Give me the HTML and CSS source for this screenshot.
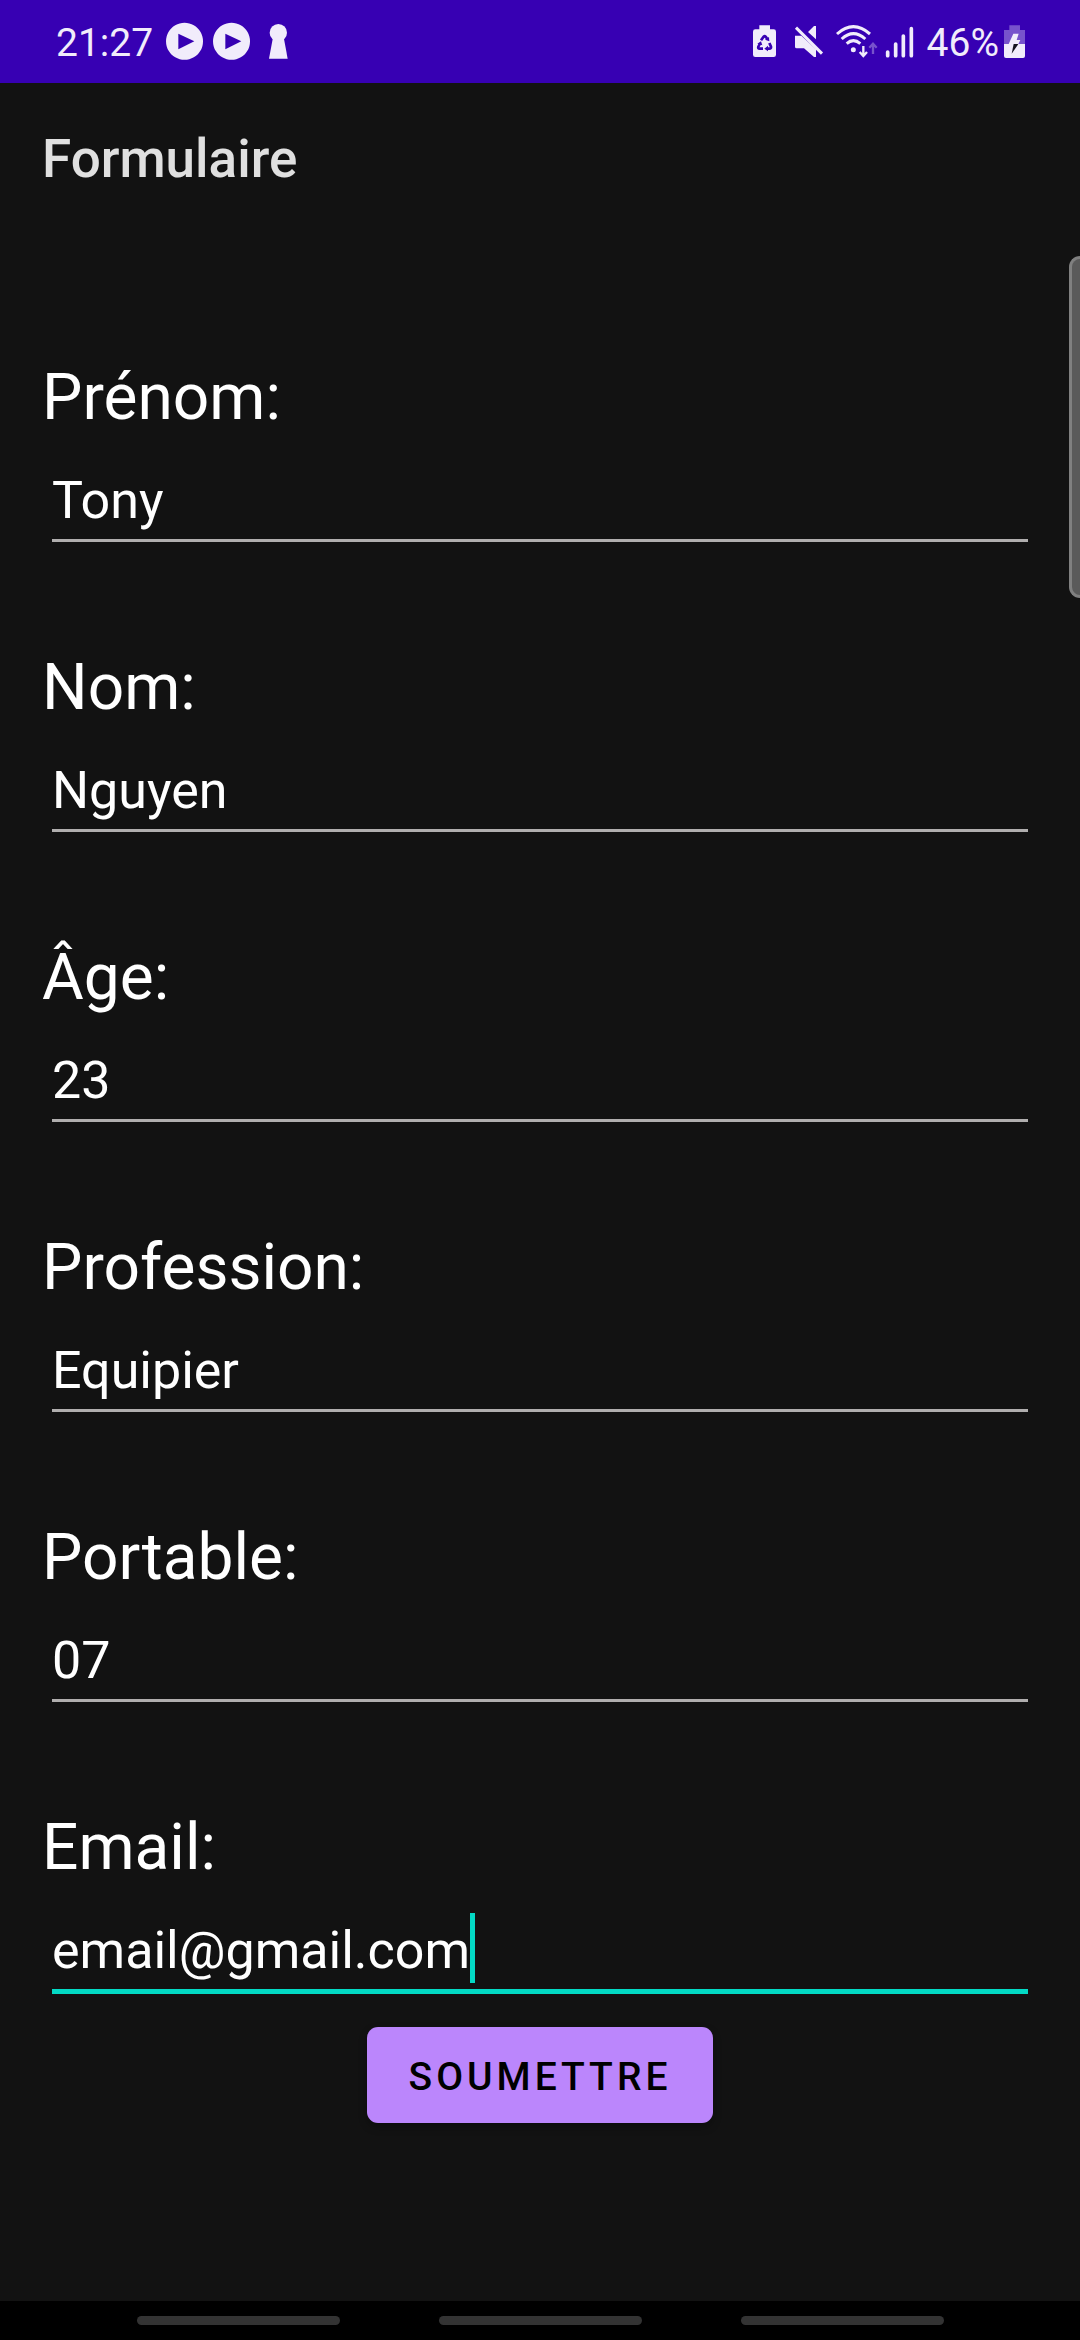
FILE: index.html
```html
<!DOCTYPE html>
<html lang="fr">
<head>
<meta charset="utf-8">
<meta name="viewport" content="width=device-width, initial-scale=1">
<title>Formulaire</title>
<link rel="stylesheet" href="styles.css">
</head>
<body>
<div class="status-bar">
  <div class="status-left">
    <span class="status-text">21:27</span>
    <svg class="icon icon-play" viewBox="375 66 117 117" aria-hidden="true"><path fill-rule="evenodd" d="M433.500 68.500a55.500 55.500 0 1 0 0.100 0ZM415 101L463 124L415 148Z"/></svg>
    <svg class="icon icon-play" viewBox="375 66 117 117" aria-hidden="true"><path fill-rule="evenodd" d="M433.500 68.500a55.500 55.500 0 1 0 0.100 0ZM415 101L463 124L415 148Z"/></svg>
    <svg class="icon icon-keyhole" viewBox="684 66 63 117" aria-hidden="true"><circle cx="715" cy="98" r="26"/><path d="M699 112H731L743 176H687Z"/></svg>
  </div>
  <div class="status-right">
    <svg class="icon icon-saver" viewBox="60 66 75 117" aria-hidden="true"><path d="M82 76H114V88H125Q132 88 132 95V164Q132 171 125 171H70Q63 171 63 164V95Q63 88 70 88H82Z"/><g class="cut"><path d="M87 121L95 110Q98 107 101 110L106 117"/><path d="M112 129L117 140Q118 146 112 146H104"/><path d="M93 146H83Q77 146 79 140L84 131"/></g><g class="cut-heads"><path d="M99 119L111 111L112 124Z"/><path d="M108 137V154L97 146Z"/><path d="M76 131L87 124L91 136Z"/></g></svg>
    <svg class="icon icon-mute" viewBox="186 66 90 117" aria-hidden="true"><path d="M189 107H208L252 148V171H246L216 145H194Q189 145 189 140ZM228 96L246 78H252V118Z"/><path class="line" d="M192 83L270 161"/></svg>
    <svg class="icon icon-wifi" viewBox="309 66 129 117" aria-hidden="true"><path class="line" d="M315 102Q364 58 414 102M329 117Q364 85 400 117M344 131Q364 113 385 131"/><circle cx="364" cy="149" r="7.500"/><path class="arrow" d="M394 138V167M383 156L394 168L405 156"/><path class="arrow dim" d="M423 162V132M412 143L423 131L434 143"/></svg>
    <svg class="icon icon-signal" viewBox="459 66 87 117" aria-hidden="true"><path class="bars" d="M467 156V167M491 132V167M514 108V167M538 86V167"/></svg>
    <span class="status-text percent">46%</span>
    <svg class="icon icon-battery" viewBox="816 66 69 117" aria-hidden="true"><path class="dim" d="M835 76H867V90H882V132H819V90H835Z"/><path d="M819 132H882V168Q882 174 876 174H825Q819 174 819 168Z"/><path d="M847 101H863L857 120H868L862 132H833Z"/><path class="bolt" d="M848 132H862L842 161Z"/></svg>
  </div>
</div>
<header class="app-bar"><h1 class="title">Formulaire</h1></header>
<main class="content">
  <form class="form">
    <div class="fields">
      <div class="field"><label class="label" for="prenom">Prénom:</label><div class="entry"><input class="input" id="prenom" type="text" value="Tony"></div></div>
      <div class="field"><label class="label" for="nom">Nom:</label><div class="entry"><input class="input" id="nom" type="text" value="Nguyen"></div></div>
      <div class="field"><label class="label" for="age">Âge:</label><div class="entry"><input class="input" id="age" type="text" inputmode="numeric" value="23"></div></div>
      <div class="field"><label class="label" for="profession">Profession:</label><div class="entry"><input class="input" id="profession" type="text" value="Equipier"></div></div>
      <div class="field"><label class="label" for="portable">Portable:</label><div class="entry"><input class="input" id="portable" type="tel" value="07"></div></div>
      <div class="field"><label class="label" for="email">Email:</label><div class="entry active"><input class="input" id="email" type="email" value="email@gmail.com"><span class="caret"></span></div></div>
    </div>
    <button class="submit" type="button">SOUMETTRE</button>
  </form>
</main>
<div class="edge-handle"></div>
<nav class="nav-bar" aria-label="Navigation"><span class="pill"></span><span class="pill"></span><span class="pill"></span></nav>
</body>
</html>
```
FILE: styles.css
```css
* { box-sizing: border-box; }
body {
  margin: 0;
  min-height: 100vh;
  display: flex;
  flex-direction: column;
  background: #121212;
  color: #fff;
  font-family: Roboto, "Liberation Sans", sans-serif;
  overflow-x: hidden;
}
.status-bar {
  height: 83px;
  padding: 0 54px 0 56px;
  display: flex;
  justify-content: space-between;
  background: #3700b3;
  color: #f1ecfb;
}
.status-left, .status-right { display: flex; align-items: center; }
.status-text { padding-top: 4px; font-size: 39px; line-height: 83px; }
.icon { height: 39px; fill: currentColor; }
.icon-play { width: 39px; margin-left: 8px; }
.status-text + .icon-play { margin-left: 12px; }
.icon-keyhole { width: 21px; margin-left: 17px; }
.icon-saver { width: 25px; }
.icon-mute { width: 30px; margin-left: 17px; }
.icon-wifi { width: 43px; margin-left: 11px; }
.icon-signal { width: 29px; margin-left: 7px; }
.percent { margin-left: 13px; }
.icon-battery { width: 23px; margin-left: 4px; }
.line { fill: none; stroke: currentColor; stroke-width: 9; }
.arrow { fill: none; stroke: currentColor; stroke-width: 7; }
.bars { fill: none; stroke: currentColor; stroke-width: 11; stroke-linecap: round; }
.dim { opacity: 0.35; }
.cut { fill: none; stroke: #3700b3; stroke-width: 8; }
.cut-heads, .icon .cut-heads path { fill: #3700b3; }
.bolt { fill: #161320; }

.app-bar { padding: 45px 42px; }
.title { margin: 0; font-size: 53px; line-height: 62px; font-weight: 500; color: #e0e0e0; }

.content { flex: 1; padding: 125px 42px 100px; }
.form { display: flex; flex-direction: column; align-items: center; gap: 33px; }
.fields { align-self: stretch; display: flex; flex-direction: column; gap: 108px; }
.field { display: flex; flex-direction: column; gap: 27px; }
.label { font-size: 64px; line-height: 76px; }
.entry {
  display: flex;
  margin: 0 10px;
  padding-bottom: 6px;
  border-bottom: 3px solid #b0aeae;
}
.input {
  flex: 1;
  min-width: 0;
  height: 70px;
  padding: 4px 0 0;
  border: 0;
  outline: 0;
  background: transparent;
  color: #fff;
  font: 52px/66px Roboto, "Liberation Sans", sans-serif;
}
.active { border-bottom: 5px solid #03dac5; }
.active .input { flex: none; field-sizing: content; max-width: 100%; }
.caret { width: 5px; height: 70px; background: #03dac5; }
.submit {
  height: 96px;
  padding: 4px 42px 0;
  border: 0;
  border-radius: 11px;
  background: #bb86fc;
  color: #000;
  font: 500 39px/46px Roboto, "Liberation Sans", sans-serif;
  letter-spacing: 4px;
  box-shadow: 0 4px 8px rgba(0, 0, 0, 0.3);
}

.edge-handle {
  position: absolute;
  top: 256px;
  right: 0;
  width: 11px;
  height: 342px;
  border: 3px solid #808080;
  border-right: 0;
  border-radius: 11px 0 0 11px;
  background: #5a5a5a;
}
.nav-bar {
  display: flex;
  justify-content: center;
  gap: 99px;
  padding: 15px 0;
  background: #000;
}
.pill { width: 203px; height: 9px; border-radius: 5px; background: #333; }
```
